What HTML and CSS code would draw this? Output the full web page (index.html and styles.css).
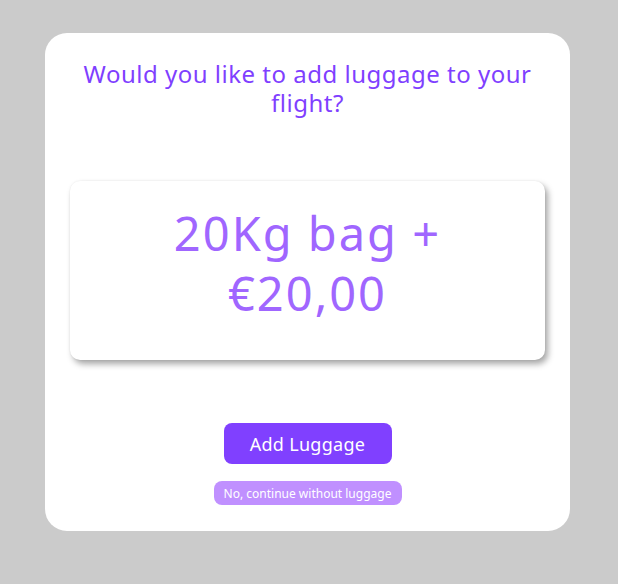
FILE: index.html
```html
<!DOCTYPE html>
<html>
<head>
<meta charset="utf-8">
<link rel="stylesheet" href="styles.css">
</head>
<body>
<div class="page">
  <div class="card">
    <h1 class="title">Would you like to add luggage to your flight?</h1>
    <div class="offer">
      <p class="offer-text">20Kg bag +<br>€20,00</p>
    </div>
    <div class="actions">
      <button class="btn-primary">Add Luggage</button>
      <button class="btn-secondary">No, continue without luggage</button>
    </div>
  </div>
</div>
</body>
</html>
```
FILE: styles.css
```css
html, body {
  margin: 0;
  padding: 0;
  background: #cbcbcb;
  font-family: "Noto Sans", "Lato", sans-serif;
}
.page {
  padding: 33px 0 0 45px;
  height: 584px;
  box-sizing: border-box;
}
.card {
  width: 525px;
  height: 498px;
  box-sizing: border-box;
  background: #ffffff;
  border-radius: 22px;
  padding: 26px 25px 0 25px;
  display: flex;
  flex-direction: column;
  align-items: center;
}
.title {
  margin: 0;
  width: 475px;
  font-size: 24px;
  line-height: 29px;
  font-weight: 400;
  letter-spacing: 0.5px;
  color: #7f3fff;
  text-align: center;
}
.offer {
  margin-top: 64px;
  width: 475px;
  height: 179px;
  box-sizing: border-box;
  padding-bottom: 16px;
  background: #ffffff;
  border-radius: 10px;
  box-shadow: 3px 4px 6px rgba(0, 0, 0, 0.35), 0 0 2px rgba(0,0,0,0.08);
  display: flex;
  align-items: center;
  justify-content: center;
}
.offer-text {
  margin: 0;
  font-size: 47px;
  line-height: 60px;
  letter-spacing: 2px;
  color: #a066ff;
  text-align: center;
}
.actions {
  margin-top: 63px;
  display: flex;
  flex-direction: column;
  align-items: center;
  gap: 17px;
}
.btn-primary {
  width: 168px;
  height: 41px;
  border: none;
  border-radius: 8px;
  background: #8040ff;
  color: #ffffff;
  font-family: inherit;
  font-size: 18px;
  letter-spacing: 0.3px;
  padding: 0;
}
.btn-secondary {
  width: 188px;
  height: 24px;
  border: none;
  border-radius: 8px;
  background: #c090ff;
  color: #ffffff;
  font-family: inherit;
  font-size: 12px;
  padding: 0;
}
```
